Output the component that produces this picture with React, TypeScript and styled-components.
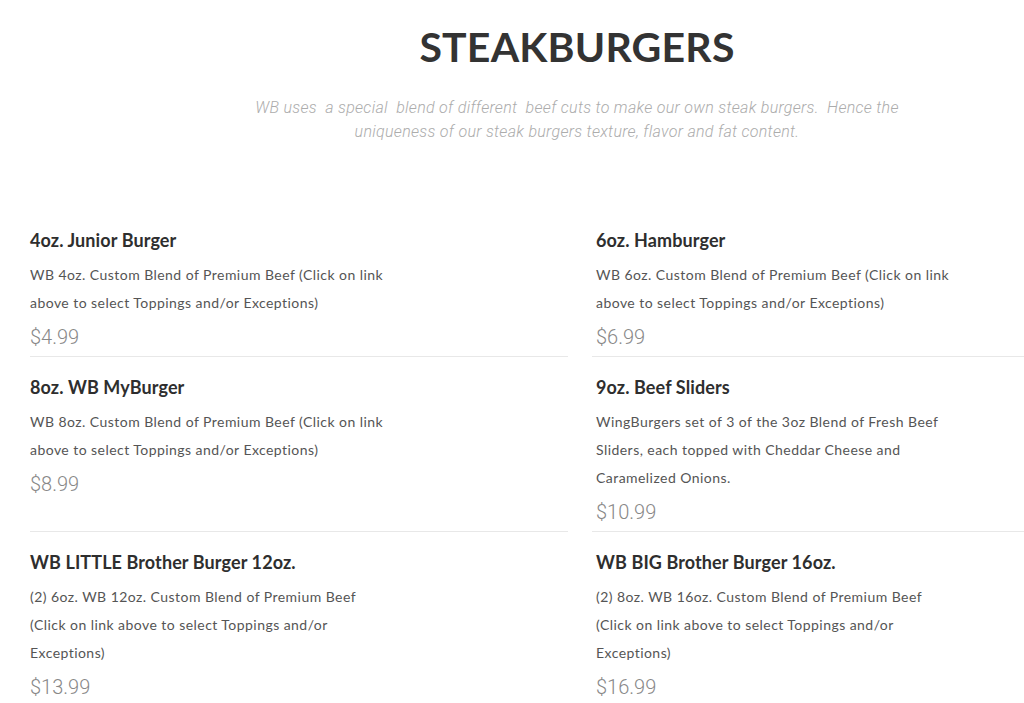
import React from "react";
import styled, { createGlobalStyle } from "styled-components";

const GlobalStyle = createGlobalStyle`
  body {
    margin: 0;
    background: #ffffff;
    font-family: Lato, "Open Sans", sans-serif;
  }
`;

const Page = styled.div`
  width: 1024px;
  height: 703px;
  overflow: hidden;
  background: #fff;
`;

const Header = styled.header`
  display: flex;
  flex-direction: column;
  align-items: center;
  padding: 22px 0 0 130px;
  height: 210px;
  box-sizing: border-box;
`;

const Title = styled.h1`
  margin: 0;
  font-family: Lato, sans-serif;
  font-weight: 700;
  font-size: 41px;
  line-height: 50px;
  color: #333;
  letter-spacing: 0.2px;
`;

const Intro = styled.p`
  margin: 24px 0 0;
  max-width: 680px;
  text-align: center;
  font-family: Roboto, sans-serif;
  font-weight: 300;
  font-style: italic;
  font-size: 16px;
  line-height: 24px;
  letter-spacing: 0.3px;
  color: #acacac;
  white-space: pre-wrap;
`;

const Menu = styled.div`
  display: grid;
  grid-template-columns: 538px 538px;
  column-gap: 24px;
  padding-left: 30px;
`;

const Item = styled.div<{ $inset: number; $last?: boolean }>`
  padding: 15px 0 5px ${(p) => p.$inset}px;
  border-bottom: ${(p) => (p.$last ? "none" : "1px solid #e8e8e8")};
`;

const ItemName = styled.h3`
  margin: 0;
  font-family: Lato, sans-serif;
  font-weight: 700;
  font-size: 18px;
  line-height: 30px;
  letter-spacing: 0.1px;
  color: #2e2e2e;
`;

const ItemDesc = styled.p`
  margin: 6px 0 0;
  max-width: 358px;
  font-family: Lato, sans-serif;
  font-size: 14px;
  line-height: 28px;
  letter-spacing: 0.45px;
  color: #555;
`;

const Price = styled.div`
  margin-top: 6px;
  font-family: Roboto, sans-serif;
  font-weight: 300;
  font-size: 20px;
  line-height: 28px;
  color: #888;
`;

type Burger = { name: string; desc: string; price: string };

const burgers: Burger[] = [
  {
    name: "4oz. Junior Burger",
    desc: "WB 4oz. Custom Blend of Premium Beef (Click on link above to select Toppings and/or Exceptions)",
    price: "$4.99",
  },
  {
    name: "6oz. Hamburger",
    desc: "WB 6oz. Custom Blend of Premium Beef (Click on link above to select Toppings and/or Exceptions)",
    price: "$6.99",
  },
  {
    name: "8oz. WB MyBurger",
    desc: "WB 8oz. Custom Blend of Premium Beef (Click on link above to select Toppings and/or Exceptions)",
    price: "$8.99",
  },
  {
    name: "9oz. Beef Sliders",
    desc: "WingBurgers set of 3 of the 3oz Blend of Fresh Beef Sliders, each topped with Cheddar Cheese and Caramelized Onions.",
    price: "$10.99",
  },
  {
    name: "WB LITTLE Brother Burger 12oz.",
    desc: "(2) 6oz. WB 12oz. Custom Blend of Premium Beef (Click on link above to select Toppings and/or Exceptions)",
    price: "$13.99",
  },
  {
    name: "WB BIG Brother Burger 16oz.",
    desc: "(2) 8oz. WB 16oz. Custom Blend of Premium Beef (Click on link above to select Toppings and/or Exceptions)",
    price: "$16.99",
  },
];

const App = () => {
  return (
    <Page>
      <GlobalStyle />
      <Header>
        <Title>STEAKBURGERS</Title>
        <Intro>
          {"WB uses  a special  blend of different  beef cuts to make our own steak burgers.  Hence the uniqueness of our steak burgers texture, flavor and fat content."}
        </Intro>
      </Header>
      <Menu>
        {burgers.map((b, i) => (
          <Item key={b.name} $inset={i % 2 ? 4 : 0} $last={i >= 4}>
            <ItemName>{b.name}</ItemName>
            <ItemDesc>{b.desc}</ItemDesc>
            <Price>{b.price}</Price>
          </Item>
        ))}
      </Menu>
    </Page>
  );
};

export default App;
